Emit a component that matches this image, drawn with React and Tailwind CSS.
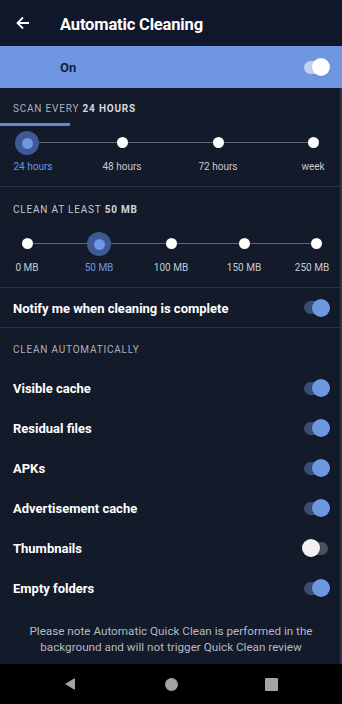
import React from 'react';

const font = { fontFamily: 'Roboto, "Noto Sans", sans-serif' };

const Toggle = ({ on, light }) => {
  if (light) {
    return (
      <div className="relative w-[28px] h-[18px] flex items-center">
        <div className="w-[24px] h-[13px] rounded-full bg-[#c3d3f2] ml-[2px]" />
        <div className="absolute right-0 top-0 w-[18px] h-[18px] rounded-full bg-white shadow" />
      </div>
    );
  }
  return (
    <div className="relative w-[28px] h-[18px] flex items-center">
      <div className={`w-[24px] h-[13px] rounded-full ml-[2px] ${on ? 'bg-[#3a4d72]' : 'bg-[#4a505c]'}`} />
      <div
        className={`absolute top-0 w-[18px] h-[18px] rounded-full shadow ${
          on ? 'right-0 bg-[#6f96e0]' : 'left-0 bg-[#f1f1f1]'
        }`}
      />
    </div>
  );
};

const Slider = ({ stops, selected, first, last }) => (
  <div className="relative h-[60px] shrink-0">
    <div
      className="absolute top-[16px] h-px bg-[#5d6474]"
      style={{ left: first, width: last - first }}
    />
    {stops.map((s, i) => (
      <React.Fragment key={i}>
        {i === selected ? (
          <div
            className="absolute top-[5px] w-[24px] h-[24px] -ml-[12px] rounded-full bg-[#3f5995] flex items-center justify-center"
            style={{ left: s.x }}
          >
            <div className="w-[11px] h-[11px] rounded-full bg-[#6f96e0]" />
          </div>
        ) : (
          <div
            className="absolute top-[11px] w-[11px] h-[11px] -ml-[5.5px] rounded-full bg-white"
            style={{ left: s.x }}
          />
        )}
        <div
          className={`absolute top-[34px] w-[60px] -ml-[30px] text-center text-[10px] leading-[14px] ${
            i === selected ? 'text-[#6f96e0]' : 'text-[#c6cad3]'
          }`}
          style={{ left: s.lx ?? s.x }}
        >
          {s.label}
        </div>
      </React.Fragment>
    ))}
  </div>
);

const SectionTitle = ({ children, className = '' }) => (
  <div className={`px-[13px] text-[10px] tracking-[0.08em] text-[#aab0bd] uppercase ${className}`}>
    {children}
  </div>
);

const rows = [
  ['Visible cache', true],
  ['Residual files', true],
  ['APKs', true],
  ['Advertisement cache', true],
  ['Thumbnails', false],
  ['Empty folders', true],
];

export default function App() {
  return (
    <div className="w-[342px] h-[704px] bg-[#131a2a] text-white overflow-hidden relative flex flex-col" style={font}>
      {/* header */}
      <div className="h-[46px] bg-[#10172a] flex items-center shrink-0">
        <svg className="ml-[16px] w-[14px] h-[14px]" viewBox="0 0 14 14" fill="none" stroke="white" strokeWidth="1.8">
          <path d="M13 7H1.5M7 1.5L1.5 7L7 12.5" />
        </svg>
        <div className="ml-[30px] text-[16.5px] font-bold tracking-[-0.01em] translate-y-[2px]">Automatic Cleaning</div>
      </div>

      {/* on band */}
      <div className="h-[42px] bg-[#6f96e0] flex items-center justify-between shrink-0 pl-[60px] pr-[12px]">
        <div className="text-[13px] font-bold text-[#14213d] translate-y-[1px]">On</div>
        <Toggle on light />
      </div>

      {/* scan every */}
      <div className="h-[38px] flex flex-col justify-end shrink-0">
        <SectionTitle className="mb-[7px]">
          Scan every <span className="font-bold text-[#d3d7de]">24 hours</span>
        </SectionTitle>
        <div className="w-[70px] h-[3px] bg-[#5a8ad4]" />
      </div>
      <Slider
        first={27}
        last={313}
        selected={0}
        stops={[
          { x: 27, lx: 33, label: '24 hours' },
          { x: 122, label: '48 hours' },
          { x: 218, label: '72 hours' },
          { x: 313, label: 'week' },
        ]}
      />
      <div className="h-px bg-[#2a3142] shrink-0" />

      {/* clean at least */}
      <div className="h-[40px] flex items-center shrink-0">
        <SectionTitle className="text-[#c2c7d0] translate-y-[2px]">
          Clean at least <span className="font-bold text-[#d3d7de]">50 MB</span>
        </SectionTitle>
      </div>
      <Slider
        first={27}
        last={316}
        selected={1}
        stops={[
          { x: 27, label: '0 MB' },
          { x: 99, label: '50 MB' },
          { x: 171, label: '100 MB' },
          { x: 244, label: '150 MB' },
          { x: 316, lx: 312, label: '250 MB' },
        ]}
      />
      <div className="h-px bg-[#2a3142] shrink-0" />

      {/* notify */}
      <div className="h-[39px] flex items-center justify-between px-[13px] pr-[12px] shrink-0">
        <div className="text-[13px] font-bold translate-y-[1px]">Notify me when cleaning is complete</div>
        <Toggle on />
      </div>
      <div className="h-px bg-[#2a3142] shrink-0" />

      {/* clean automatically */}
      <div className="h-[40px] flex items-center shrink-0">
        <SectionTitle className="translate-y-[1px]">Clean automatically</SectionTitle>
      </div>
      {rows.map(([label, on]) => (
        <div key={label} className="h-[40px] flex items-center justify-between px-[13px] pr-[12px] shrink-0">
          <div className="text-[13px] font-bold translate-y-[1px]">{label}</div>
          <Toggle on={on} />
        </div>
      ))}

      {/* note */}
      <div className="flex-1 flex items-center justify-center text-center text-[11.7px] leading-[16px] text-[#b4b9c4] px-[16px] pt-[6px]">
        Please note Automatic Quick Clean is performed in the background and will not trigger Quick Clean review
      </div>

      {/* nav bar */}
      <div className="h-[40px] bg-black flex items-center shrink-0 relative">
        <div className="flex-1 flex justify-center pl-[20px]">
          <svg width="12" height="14" viewBox="0 0 12 14">
            <path d="M11 1L1 7L11 13Z" fill="#a3a3a3" />
          </svg>
        </div>
        <div className="flex-1 flex justify-center">
          <div className="w-[13px] h-[13px] rounded-full bg-[#a3a3a3]" />
        </div>
        <div className="flex-1 flex justify-center pr-[20px]">
          <div className="w-[13px] h-[13px] rounded-[1px] bg-[#a3a3a3]" />
        </div>
      </div>

      {/* scrollbar */}
      <div className="absolute right-0 top-[88px] w-[2px] h-[576px] bg-[#2f3544]" />
    </div>
  );
}
